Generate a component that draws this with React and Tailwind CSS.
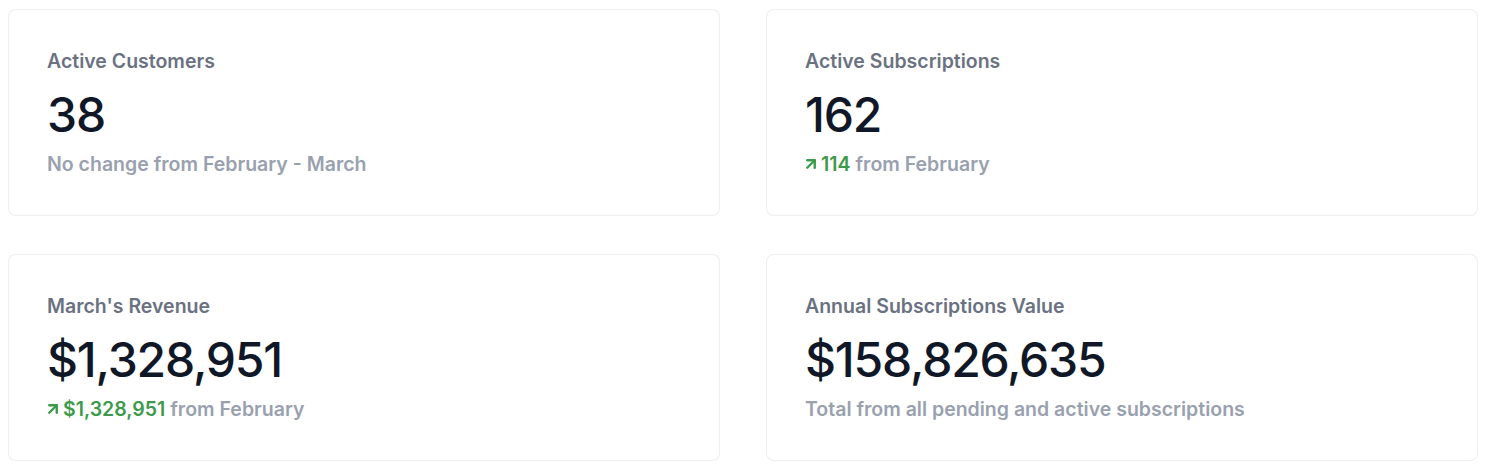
import { ArrowUpRight } from "lucide-react";

const stats = [
  {
    title: "Active Customers",
    value: "38",
    note: "No change from February - March",
  },
  {
    title: "Active Subscriptions",
    value: "162",
    change: "114",
    note: "from February",
  },
  {
    title: "March's Revenue",
    value: "$1,328,951",
    change: "$1,328,951",
    note: "from February",
  },
  {
    title: "Annual Subscriptions Value",
    value: "$158,826,635",
    note: "Total from all pending and active subscriptions",
  },
];

function StatCard({ title, value, change, note }) {
  return (
    <div className="bg-white border border-gray-200/70 rounded-lg px-[38px] pt-[37px] pb-[37px]">
      <p className="text-[19.5px] font-semibold text-gray-500 leading-7">{title}</p>
      <p className="mt-[16px] text-5xl font-medium text-gray-900 leading-none tracking-tight">
        {value}
      </p>
      <p className="mt-[11px] text-[19.5px] font-semibold text-gray-400 leading-7 flex items-center">
        {change && (
          <>
            <ArrowUpRight className="w-[18px] h-[18px] text-[#3d9a4a] mr-[1px] -ml-[3px]" strokeWidth={3.2} />
            <span className="text-[#3d9a4a] mr-[5px]">{change}</span>
          </>
        )}
        {note}
      </p>
    </div>
  );
}

export default function App() {
  return (
    <div
      className="bg-white min-h-screen p-2 pt-[9px]"
      style={{ fontFamily: "Inter, 'Noto Sans', sans-serif" }}
    >
      <div className="grid grid-cols-2 gap-x-[46px] gap-y-[38px] pr-[2px]">
        {stats.map((s) => (
          <StatCard key={s.title} {...s} />
        ))}
      </div>
    </div>
  );
}
